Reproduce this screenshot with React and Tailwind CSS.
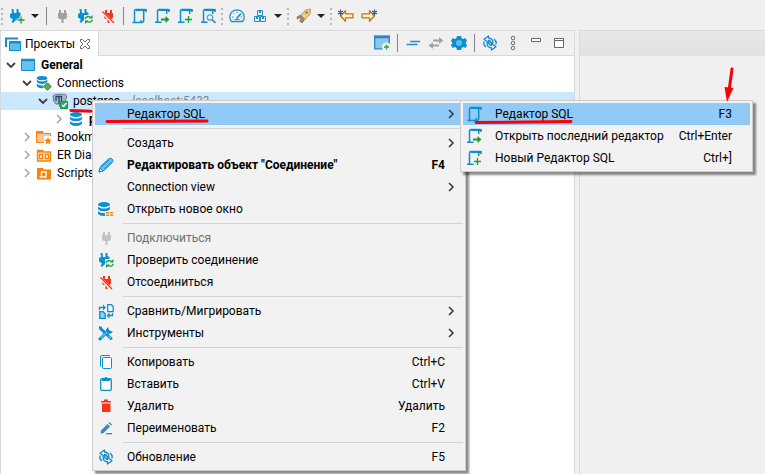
import React from "react";

const BLUE = "#0a8fd0";
const GREEN = "#12a03a";
const RED = "#fa3216";
const GOLD = "#b8791a";

function Icon({ children, className = "" }) {
  return (
    <svg width="16" height="16" viewBox="0 0 16 16" fill="none" aria-hidden="true" className={`shrink-0 ${className}`}>
      {children}
    </svg>
  );
}

function PlugShape({ color, x = 0 }) {
  return (
    <path
      transform={`translate(${x} 0)`}
      fill={color}
      d="M5 2h2v3h3V2h2v3h1v4l-1 2h-2l-.5 1v3h-2v-3L7 11H5L4 9V5h1z"
    />
  );
}

function Plus({ x = 12, y = 12, color = GREEN }) {
  return <path d={`M${x} ${y - 3.5}v7M${x - 3.5} ${y}h7`} stroke={color} strokeWidth="1.3" />;
}

const BluePlug = () => <path fill={BLUE} d="M2.500 1h2l.5 4h2.500V1h2v3l2 1v4l-2 2.500L7 12l-1 1-2 2-1.500-1.500L4 11.500 1 9.500V6l2-1z" />;

const PlugAdd = () => (
  <Icon>
    <BluePlug />
    <path d="M12 8v8M8 12h8" stroke="#f0f0f0" strokeWidth="3" />
    <Plus />
  </Icon>
);
const Plug = ({ color = "#a0a0a0" }) => (
  <Icon><PlugShape color={color} /></Icon>
);
const PlugCheck = () => (
  <Icon>
    <BluePlug />
    <path d="M7 7h9v9H7z" fill="#f0f0f0" />
    <path d="M8 11c.5-2.500 4-3 5.500-1.500M15.500 11.800c-.7 2.500-4 3-5.500 1.500" stroke={GREEN} strokeWidth="1.300" />
    <path d="M15.500 7v3.500H12zM8 16v-3.500h3.500z" fill={GREEN} />
  </Icon>
);
const PlugOff = () => (
  <Icon>
    <PlugShape color={RED} />
    <path d="M1.500 3.500l12 12" stroke="#f0f0f0" strokeWidth="3" />
    <path d="M2.500 3.500l11.500 11.500" stroke={RED} strokeWidth="1.300" />
  </Icon>
);

function ScriptBase({ full }) {
  return (
    <>
      <path d="M3.500 14V3Q3.500 1.500 5 1.500H14.500" stroke={BLUE} strokeWidth="1.500" />
      <path d="M5 2.200H15M15 1v3" stroke={BLUE} strokeWidth="1.600" />
      {full ? (
        <path d="M12.700 2v10.500Q12.700 14.500 10.500 14.500H1.500M10 14V12" stroke={BLUE} strokeWidth="1.500" />
      ) : (
        <path d="M12.700 2v4M1 14.300h6.500" stroke={BLUE} strokeWidth="1.500" />
      )}
    </>
  );
}
const Script = () => <Icon><ScriptBase full /></Icon>;
const ScriptGo = () => (
  <Icon>
    <ScriptBase />
    <path d="M7 11.500h6" stroke={GREEN} strokeWidth="2" />
    <path d="M11.500 8l4 3.500-4 3.500z" fill={GREEN} />
  </Icon>
);
const ScriptAdd = () => (
  <Icon>
    <ScriptBase />
    <Plus x={11.5} y={11.5} />
  </Icon>
);
const ScriptFind = () => (
  <Icon>
    <ScriptBase />
    <circle cx="10" cy="9.500" r="2.700" fill="#eef6fb" stroke="#55a5d2" strokeWidth="1.300" />
    <path d="M12 11.500l3.500 3.500" stroke="#3187c0" strokeWidth="1.700" />
  </Icon>
);
const Gauge = () => (
  <Icon>
    <path d="M2.500 13.500Q.8 11.500.8 9a7.200 7.200 0 0 1 14.400 0q0 2.500-1.700 4.500z" fill="#eef7fc" stroke="#268bc9" strokeWidth="1.300" />
    <path d="M3 9h1.500M11.500 9H13M8 3.500V5M4.300 5.300l1 1" stroke="#268bc9" />
    <path d="M7.500 10.500l4.500-5" stroke="#268bc9" strokeWidth="1.700" />
    <path d="M5.500 11.500h5" stroke="#268bc9" />
  </Icon>
);
const Boxes = () => (
  <Icon>
    <path d="M5.500 2.500h5v5h-5zM2.500 8.500h5v5h-5zM8.500 8.500h5v5h-5z" fill="#e8f5fc" stroke="#268bc9" />
    <path d="M8 3v2M5 9v2M11 9v2" stroke="#268bc9" strokeWidth="2" />
  </Icon>
);
const Rocket = () => (
  <Icon>
    <path d="M0 15l3-6 4 4z" fill="#fff0a5" />
    <path d="M2 9l4-2 4 4-3 4-2-2H3z" fill="#8e8580" stroke="#6e655e" strokeWidth=".7" />
    <path d="M6 7l4.500-5 5-1-.5 5-5 5.500z" fill="#f8c878" stroke="#cf9650" />
    <circle cx="11.500" cy="4.500" r="1.300" fill="#3f91bd" />
    <path d="M1 14l4-3" stroke="#fffbe0" strokeWidth="2" />
  </Icon>
);
function GoldArrow({ right }) {
  return (
    <Icon>
      <g transform={right ? "translate(16 0) scale(-1 1)" : undefined}>
        <path d="M7.500 2.800v3H15v4H7.500v3.500L2.500 8z" fill="#fff2c0" stroke={GOLD} strokeWidth="1.300" strokeLinejoin="round" />
        <path d="M2.500 1.500v6M0 3l5 3M5 3L0 6" stroke="#3d5c80" strokeWidth="1.200" />
      </g>
    </Icon>
  );
}

const WindowAdd = () => (
  <Icon>
    <path d="M.7 1.200h14.600v12.600H.7z" fill="#90c6ea" stroke="#2786c8" strokeWidth="1.300" />
    <path d="M0 2h16" stroke="#2786c8" strokeWidth="2.500" />
    <circle cx="12.500" cy="12" r="4.500" fill="#f0f0f0" />
    <path d="M12.500 9.500v5M10 12h5" stroke="#35a335" strokeWidth="1.300" />
  </Icon>
);
const Collapse = () => (
  <Icon><path d="M5 6.500h10M1.500 9.500h11" stroke="#258bc9" strokeWidth="1.500" /></Icon>
);
const Swap = () => (
  <Icon>
    <path d="M5 5.500h6M5 10.500h6" stroke="#a0a0a0" strokeWidth="1.800" />
    <path d="M11 2.200l4.500 3.300L11 8.800zM5 7.200L.5 10.500 5 13.800z" fill="#a0a0a0" />
  </Icon>
);
const Gear = () => (
  <Icon>
    <path d="M6 1h4l.6 2.200 1.600.9L14.500 3l1.500 3-1.500 2 1.500 2-1.500 3-2.300-1-1.600.9L10 15H6l-.6-2.100-1.600-.9L1.500 13 0 10l1.500-2L0 6l1.500-3 2.300 1.100 1.600-.9z" fill={BLUE} />
    <circle cx="8" cy="8" r="3" fill="#62bce6" />
  </Icon>
);
const Refresh = () => (
  <Icon>
    <g stroke="#168ccc" strokeWidth="1.300" strokeLinejoin="round">
      <path d="M6.500 1v2Q11 3.500 11 8H9Q9 6 6.500 5.500v2L2 4.200z" />
      <path d="M9.500 15v-2Q5 12.500 5 8h2q0 2 2.500 2.500v-2l4.500 3.300z" />
      <path d="M2.500 6.500Q.5 9 4 12M13.500 9.500q2-2.500-1.500-5.500" />
    </g>
  </Icon>
);
const MoreDots = () => (
  <Icon>
    <g stroke="#6f6f6f">
      <circle cx="8" cy="3" r="1.800" />
      <circle cx="8" cy="8" r="1.800" />
      <circle cx="8" cy="13" r="1.800" />
    </g>
  </Icon>
);
const Minimize = () => (
  <Icon><path d="M3.500 3.500h9v3h-9z" fill="#fff" stroke="#666" /></Icon>
);
const Maximize = () => (
  <Icon><path d="M3.500 3.500h9v9h-9zM3 5.500h10" fill="#fff" stroke="#666" /></Icon>
);

const ProjectsIcon = () => (
  <Icon>
    <path d="M1 11V2.500h12" stroke="#168ccc" strokeWidth="2" />
    <path d="M4.500 5.500h11v9h-11z" fill="#60bfe9" stroke="#168ccc" />
    <path d="M4 6.500h12" stroke="#168ccc" strokeWidth="2" />
  </Icon>
);
const ProjectIcon = () => (
  <Icon>
    <path d="M1.500 2.500h13v11h-13z" fill="#62c3ee" stroke="#168ccc" />
    <path d="M1 3h14" stroke="#168ccc" strokeWidth="2.500" />
  </Icon>
);
function Cylinder() {
  return (
    <>
      <ellipse cx="8" cy="3.500" rx="6" ry="2.500" fill={BLUE} />
      <path d="M2 5.500q1.500 2 6 2t6-2V8q-1.500 2.200-6 2.200T2 8zM2 10q1.500 2 6 2t6-2v2.500Q12.500 15 8 15t-6-2.500z" fill={BLUE} />
    </>
  );
}
const DbIcon = () => <Icon><Cylinder /></Icon>;
const ConnectionsIcon = () => (
  <Icon>
    <g transform="translate(-1 0) scale(.88)"><Cylinder /></g>
    <path d="M11.500 6.500l5 5-5 5-5-5z" fill="#fff" />
    <path d="M11.500 7.700l3.800 3.800-3.800 3.800-3.800-3.800z" fill="#56ae57" stroke="#239144" />
  </Icon>
);
const DbWindow = () => (
  <Icon>
    <g transform="translate(-2 0)"><Cylinder /></g>
    <path d="M7 10h9v6H7z" fill="#f0f0f0" />
    <path d="M8 11.700h7.500M8 14.200h7.500" stroke="#f48b18" strokeWidth="1.400" strokeDasharray="3.200 .8" />
  </Icon>
);
const PostgresIcon = () => (
  <Icon>
    <path d="M1 3q2-2.500 5-1.500 3-1 5 0 3.500-1 3.500 2.500L13 9l-2 1v4H8l-1-3H4Q1 9 1 3z" fill="#a9b9c9" stroke="#6b7684" />
    <path d="M4 3v5M7 4v7M9.500 3v5M4.500 3.500H10" stroke="#1d4975" strokeWidth="1.300" />
    <path d="M8.500 8.500h7v7h-7z" fill="#37a760" stroke="#209149" />
    <path d="M10 12l1.500 1.500 3-3.500" stroke="#fff" strokeWidth="1.400" />
  </Icon>
);
const BookmarkFolder = () => (
  <Icon>
    <path d="M.5 2.500h6l1.500 2h6.500v9H.5z" fill="#fbc59a" stroke="#f7820a" />
    <path d="M.5 2h6l1 2.500h-7z" fill="#f7820a" />
    <path d="M8 7h8v9H8z" fill="#fff" />
    <path d="M12 8l1.100 2.600 2.900.2-2.200 1.800.7 2.900-2.500-1.600-2.500 1.600.7-2.900L8 10.800l2.900-.2z" fill="#f7820a" />
  </Icon>
);
const DiagramFolder = () => (
  <Icon>
    <path d="M1.500 3.500h5l1 1.500h7v9h-13z" fill="#ffe1c2" stroke="#f7820a" strokeWidth="1.400" />
    <path d="M1 3h6v2.500H1z" fill="#f7820a" />
    <path d="M3.500 7.500h3v4h-3zM9.500 7.500h3v4h-3z" fill="#fff" stroke="#f7820a" strokeWidth="1.300" />
  </Icon>
);
const ScriptsFolder = () => (
  <Icon>
    <path d="M1 3h6l1 1.500h7v10H1z" fill="#f7820a" />
    <path d="M5.500 12V7H11M10 7v5H3.500" stroke="#fff" strokeWidth="1.300" />
  </Icon>
);

const Pencil = () => (
  <Icon>
    <path d="M1 15l1.500-5.500L10.500 2q2-1.500 3.700 0 1.500 1.700 0 3.500L6 13.500z" fill="#62c3ee" stroke="#148aca" />
    <path d="M1 15l1-4 3 3z" fill="#fff" stroke="#148aca" />
    <path d="M4 9.500L11 3M6.500 12l7-7" stroke="#148aca" />
  </Icon>
);
const Migrate = () => (
  <Icon>
    <path d="M9.700 1.700h3.500l2 2v5H9.700z" fill="#fff" stroke={BLUE} strokeWidth="1.300" />
    <path d="M1.700 8.700h3.500l2 2v4.600H1.700z" fill="#8dd0f0" stroke={BLUE} strokeWidth="1.300" />
    <path d="M1.500 7V4.500H6M14.500 10v2.500H11" stroke={BLUE} strokeWidth="1.300" />
    <path d="M5 1.500l3 3-3 3zM11.500 9.500l-3 3 3 3z" fill={BLUE} />
  </Icon>
);
const Tools = () => (
  <Icon>
    <path d="M2.500 3.500l10.500 10" stroke={BLUE} strokeWidth="3" strokeLinecap="round" />
    <path d="M1 1l3 1v2L2 5 1 3z" fill={BLUE} />
    <path d="M2 14l8-8" stroke={BLUE} strokeWidth="3" strokeLinecap="round" />
    <path d="M10 2l1 3.500 4 1-3 2.500-4-1V4.500z" fill={BLUE} />
    <path d="M3 13l6-6M10.500 11l2.500 2.500" stroke="#62c3ee" strokeWidth="1.200" />
  </Icon>
);
const Copy = () => (
  <Icon>
    <path d="M2.500 12.500v-10q0-1 1-1H12" stroke={BLUE} />
    <rect x="4.500" y="3.500" width="9" height="11" rx="1" fill="#f8fcff" stroke={BLUE} />
  </Icon>
);
const Paste = () => (
  <Icon>
    <rect x="2.700" y="2.700" width="10.600" height="11.600" rx="1" fill="#fff" stroke={BLUE} strokeWidth="1.300" />
    <path d="M4 2h2.500Q8 0 9.500 2H12v3H4z" fill={BLUE} />
  </Icon>
);
const Trash = () => (
  <Icon><path d="M3 3h3V1.500h4V3h3v1.500H3zM4 5.500h8.500V14H4z" fill={RED} /></Icon>
);
const Rename = () => (
  <Icon>
    <path d="M2.500 13.500l.5-3L9.500 4l2.500 2.500-6.500 6.500zM10.500 3l1-1L14 4.500l-1 1z" fill="#2c8ccb" />
    <path d="M8 13.700h6" stroke="#2c8ccb" strokeWidth="1.300" />
  </Icon>
);

function Chevron({ open, color = "#a6a6a6" }) {
  return (
    <svg width="10" height="10" viewBox="0 0 10 10" fill="none" aria-hidden="true" className="shrink-0">
      <path d={open ? "M1 3l4 4 4-4" : "M3 1l4 4-4 4"} stroke={color} strokeWidth={open ? 1.8 : 1.5} />
    </svg>
  );
}

function ToolButton({ label, children }) {
  return (
    <button type="button" aria-label={label} className="flex h-6 w-[23px] shrink-0 items-center justify-center">
      {children}
    </button>
  );
}
function CaretButton({ label }) {
  return (
    <button type="button" aria-label={label} className="flex h-6 w-3.5 shrink-0 items-center justify-center">
      <svg width="8" height="4" viewBox="0 0 8 4" aria-hidden="true"><path d="M0 0h8L4 4z" fill="#222" /></svg>
    </button>
  );
}
const Divider = () => (
  <span className="flex w-2 shrink-0 justify-center"><span className="h-[18px] w-px bg-[#858585]" /></span>
);
const Grip = () => (
  <span className="flex w-1.5 shrink-0 flex-col items-center gap-[3px]">
    <span className="size-0.5 bg-[#bcb8b4]" />
    <span className="size-0.5 bg-[#bcb8b4]" />
    <span className="size-0.5 bg-[#bcb8b4]" />
    <span className="size-0.5 bg-[#bcb8b4]" />
  </span>
);

function Toolbar() {
  return (
    <div role="toolbar" className="-ml-px flex h-8 shrink-0 items-center">
      <Grip />
      <ToolButton label="Новое соединение"><PlugAdd /></ToolButton>
      <CaretButton label="Типы соединений" />
      <Divider />
      <ToolButton label="Подключиться"><Plug /></ToolButton>
      <ToolButton label="Проверить соединение"><PlugCheck /></ToolButton>
      <ToolButton label="Отсоединиться"><PlugOff /></ToolButton>
      <Divider />
      <ToolButton label="Редактор SQL"><Script /></ToolButton>
      <ToolButton label="Открыть последний редактор"><ScriptGo /></ToolButton>
      <ToolButton label="Новый Редактор SQL"><ScriptAdd /></ToolButton>
      <ToolButton label="Найти редактор"><ScriptFind /></ToolButton>
      <Grip />
      <ToolButton label="Панель мониторинга"><Gauge /></ToolButton>
      <ToolButton label="Драйверы"><Boxes /></ToolButton>
      <CaretButton label="Список драйверов" />
      <Grip />
      <ToolButton label="Задачи"><Rocket /></ToolButton>
      <CaretButton label="Список задач" />
      <Grip />
      <ToolButton label="Назад"><GoldArrow /></ToolButton>
      <ToolButton label="Вперёд"><GoldArrow right /></ToolButton>
    </div>
  );
}

function ViewHeader() {
  return (
    <div className="flex h-[25px] shrink-0 items-stretch">
      <div role="tab" aria-selected="true" className="flex w-[98px] shrink-0 items-center border-r border-[#d9d9d9] bg-white pl-1">
        <ProjectsIcon />
        <span className="ml-1 w-[54px]">Проекты</span>
        <button type="button" aria-label="Закрыть" className="flex size-3">
          <svg width="12" height="12" viewBox="0 0 12 12" fill="#fff" stroke="#666" aria-hidden="true">
            <path d="M1.500 1.500h2L6 4l2.500-2.500h2v2L8 6l2.500 2.500v2h-2L6 8l-2.500 2.500h-2v-2L4 6 1.500 3.500z" />
          </svg>
        </button>
      </div>
      <div className="flex flex-1 items-center justify-end border-b border-[#d9d9d9] pr-1">
        <ToolButton label="Новый проект"><WindowAdd /></ToolButton>
        <Divider />
        <ToolButton label="Свернуть всё"><Collapse /></ToolButton>
        <ToolButton label="Связать с редактором"><Swap /></ToolButton>
        <ToolButton label="Настройки"><Gear /></ToolButton>
        <Divider />
        <ToolButton label="Обновить"><Refresh /></ToolButton>
        <ToolButton label="Меню"><MoreDots /></ToolButton>
        <ToolButton label="Свернуть"><Minimize /></ToolButton>
        <ToolButton label="Развернуть"><Maximize /></ToolButton>
      </div>
    </div>
  );
}

const indents = ["pl-[5px]", "pl-[21px]", "pl-[37px]", "pl-[53px]"];

const tree = [
  { level: 0, open: true, icon: <ProjectIcon />, label: "General", bold: true },
  { level: 1, open: true, icon: <ConnectionsIcon />, label: "Connections" },
  { level: 2, open: true, icon: <PostgresIcon />, label: "postgres", detail: "- localhost:5432", selected: true },
  { level: 3, icon: <DbIcon />, label: "postgres", bold: true },
  { level: 1, icon: <BookmarkFolder />, label: "Bookmarks" },
  { level: 1, icon: <DiagramFolder />, label: "ER Diagrams" },
  { level: 1, icon: <ScriptsFolder />, label: "Scripts" },
];

function TreeRow({ row }) {
  return (
    <li
      role="treeitem"
      aria-level={row.level + 1}
      aria-selected={!!row.selected}
      className={`flex h-[18px] items-center ${indents[row.level]} ${row.selected ? "bg-[#cce8ff]" : ""}`}
    >
      <Chevron open={row.open} color={row.open ? "#404040" : "#a6a6a6"} />
      <span className="ml-1 flex">{row.icon}</span>
      <span className={`ml-[5px] whitespace-nowrap ${row.bold ? "font-bold" : ""}`}>{row.label}</span>
      {row.detail && <span className="ml-1.5 text-[#7d8790] italic">{row.detail}</span>}
    </li>
  );
}

function Menu({ label, items, className }) {
  return (
    <div
      role="menu"
      aria-label={label}
      className={`absolute border border-[#ccc] bg-[#f2f2f2] p-0.5 shadow-[3px_3px_2px_rgba(0,0,0,0.45)] ${className}`}
    >
      {items.map((item, i) =>
        item === null ? (
          <div key={i} role="separator" className="ml-7 flex h-[7px] items-center">
            <span className="h-px w-full bg-[#d4d4d4]" />
          </div>
        ) : (
          <button
            key={i}
            type="button"
            role="menuitem"
            disabled={item.disabled}
            className={`flex h-[22px] w-full items-center pl-[3px] text-left whitespace-nowrap ${item.active ? "bg-[#91c9f7]" : ""} ${item.bold ? "font-bold" : ""} ${item.disabled ? "text-[#707070]" : ""}`}
          >
            <span className="flex w-[29px] shrink-0">{item.icon}</span>
            <span className="flex-1">{item.label}</span>
            <span>{item.keys}</span>
            <span className="flex w-[18px] shrink-0 justify-center pr-1.5">
              {item.sub && <Chevron color="#333" />}
            </span>
          </button>
        ),
      )}
    </div>
  );
}

const contextItems = [
  { label: "Редактор SQL", sub: true, active: true },
  null,
  { label: "Создать", sub: true },
  { label: 'Редактировать объект "Соединение"', keys: "F4", bold: true, icon: <Pencil /> },
  { label: "Connection view", sub: true },
  { label: "Открыть новое окно", icon: <DbWindow /> },
  null,
  { label: "Подключиться", disabled: true, icon: <Plug color="#c4c4c4" /> },
  { label: "Проверить соединение", icon: <PlugCheck /> },
  { label: "Отсоединиться", icon: <PlugOff /> },
  null,
  { label: "Сравнить/Мигрировать", sub: true, icon: <Migrate /> },
  { label: "Инструменты", sub: true, icon: <Tools /> },
  null,
  { label: "Копировать", keys: "Ctrl+C", icon: <Copy /> },
  { label: "Вставить", keys: "Ctrl+V", icon: <Paste /> },
  { label: "Удалить", keys: "Удалить", icon: <Trash /> },
  { label: "Переименовать", keys: "F2", icon: <Rename /> },
  null,
  { label: "Обновление", keys: "F5", icon: <Refresh /> },
];

const editorItems = [
  { label: "Редактор SQL", keys: "F3", active: true, icon: <Script /> },
  { label: "Открыть последний редактор", keys: "Ctrl+Enter", icon: <ScriptGo /> },
  { label: "Новый Редактор SQL", keys: "Ctrl+]", icon: <ScriptAdd /> },
];

function Annotations() {
  return (
    <svg className="pointer-events-none absolute top-0 left-0" width="765" height="474" fill="none" aria-hidden="true">
      <g stroke="#fb0007" strokeWidth="3" strokeLinecap="round">
        <path d="M71 110.500l20 .8M107 121.500l100-.5M476 122.500l95-1" />
        <path d="M732 69l-3 22" />
      </g>
      <path d="M724.500 87l9 1-6.500 14z" fill="#fb0007" />
    </svg>
  );
}

export default function App() {
  return (
    <div className="relative flex h-screen flex-col overflow-hidden bg-[#f0f0f0] font-['Roboto','Noto_Sans',sans-serif] text-[12px] leading-4 text-black">
      <Toolbar />
      <main className="-mt-0.5 flex min-h-0 flex-1 gap-1">
        <section className="flex w-[575px] shrink-0 flex-col border border-b-0 border-[#d9d9d9]">
          <ViewHeader />
          <ul role="tree" className="flex-1 bg-white">
            {tree.map((row, i) => <TreeRow key={i} row={row} />)}
          </ul>
        </section>
        <section className="min-w-0 flex-1 border-t border-l border-[#d9d9d9]">
          <div className="h-[25px] bg-linear-to-b from-[#e8e8e8] to-[#e1e1e1]" />
        </section>
      </main>
      <Menu label="Соединение" items={contextItems} className="top-[100px] left-[92px] w-[374px]" />
      <Menu label="Редактор SQL" items={editorItems} className="top-[100px] left-[460px] w-[293px]" />
      <Annotations />
    </div>
  );
}
